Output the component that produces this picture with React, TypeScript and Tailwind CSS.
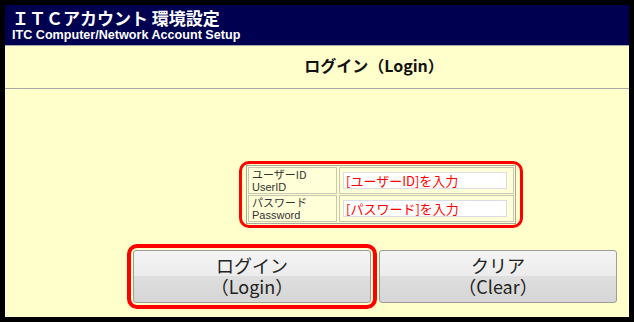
import React from "react";

const jp = "font-['Noto_Sans_CJK_JP','Noto_Sans',sans-serif]";

const Row = ({ ja, en, ph }: { ja: string; en: string; ph: string }) => {
  return (
    <div className="flex h-[27px] gap-[2px]">
      <div className="w-[89px] border border-[#c8c8b4] bg-[#ffffd8] pl-[3px] text-[11px] leading-[12.5px] text-[#333]">
        <div>{ja}</div>
        <div className="font-['Liberation_Sans',sans-serif]">{en}</div>
      </div>
      <div className="flex flex-1 items-center border border-[#c8c8b4] bg-[#ffffd8] pl-[3px] pr-[4px]">
        <div className="flex h-[17px] w-[164px] items-center border border-[#dcdce6] bg-white pl-[2px] text-[13px] leading-[15px] text-[#f00]">
          {ph}
        </div>
      </div>
    </div>
  );
};

const Btn = ({ ja, en }: { ja: string; en: string }) => {
  return (
    <div className="flex h-[53px] w-[238px] flex-col items-center justify-center rounded-[3px] border border-[#9c9c9c] bg-[linear-gradient(#f4f4f4,#ececec_50%,#dedede_50%,#d6d6d6)] pb-[1px] text-[18px] leading-[21px] text-[#222]">
      <div>{ja}</div>
      <div>{en}</div>
    </div>
  );
};

export default function App() {
  return (
    <div className={`flex h-[322px] w-[634px] bg-black p-[5px] ${jp}`}>
      <div className="flex flex-1 flex-col bg-[#ffffcc]">
        <div className="h-[40px] bg-[#000050] pl-[7px] pt-[2px] text-white">
          <div className="text-[17px] font-bold leading-[21px]">ＩＴＣアカウント 環境設定</div>
          <div className="font-['Liberation_Sans',sans-serif] text-[12.6px] font-bold leading-[14px]">
            ITC Computer/Network Account Setup
          </div>
        </div>
        <div className="flex h-[44px] items-center justify-center border-y border-[#a8a8a8] pb-[4px] pl-[114px] text-[16px] font-bold text-[#111]">
          ログイン（Login）
        </div>
        <div className="ml-[234px] mt-[72px] w-[284px] rounded-[10px] border-[3px] border-[#f00] px-[4px] py-[1px]">
          <div className="flex flex-col gap-[1px] border border-[#a8a8a0] p-[1px]">
            <Row ja="ユーザーID" en="UserID" ph="[ユーザーID]を入力" />
            <Row ja="パスワード" en="Password" ph="[パスワード]を入力" />
          </div>
        </div>
        <div className="ml-[122px] mt-[16px] flex items-start gap-[2px]">
          <div className="rounded-[10px] border-[4px] border-[#f00] p-[2px]">
            <Btn ja="ログイン" en="（Login）" />
          </div>
          <div className="pt-[6px]">
            <Btn ja="クリア" en="（Clear）" />
          </div>
        </div>
      </div>
    </div>
  );
}
